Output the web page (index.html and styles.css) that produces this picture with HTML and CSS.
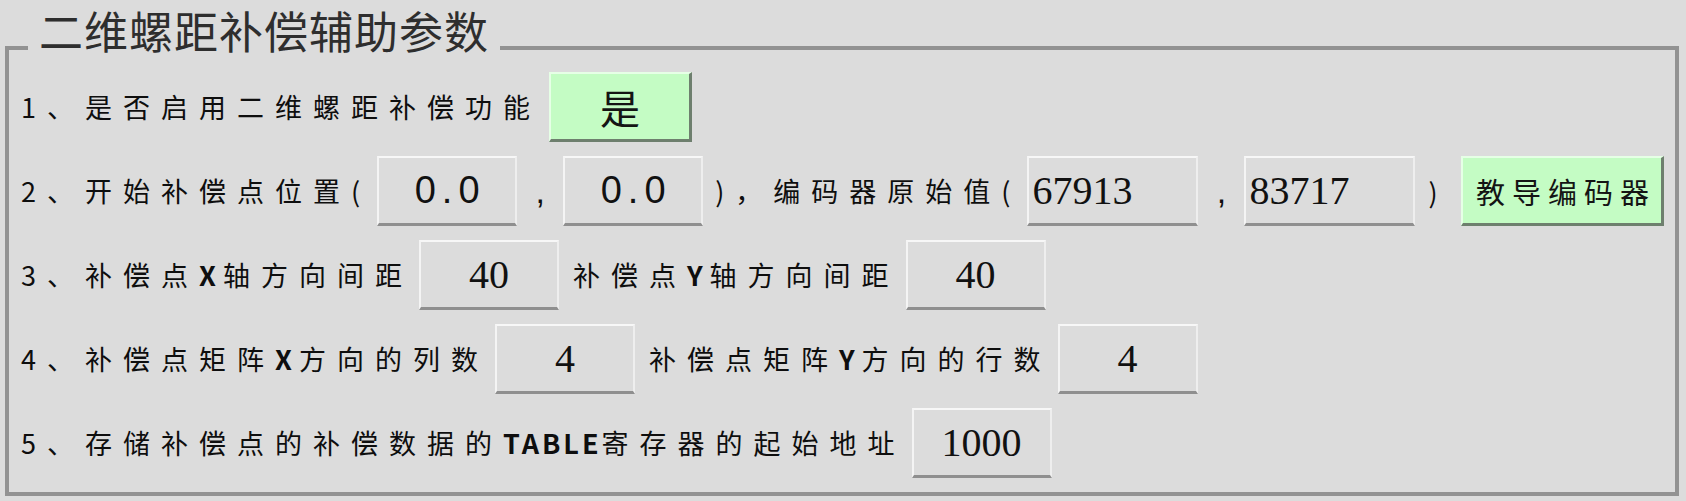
FILE: index.html
```html
<!DOCTYPE html>
<html lang="zh-CN">
<head>
<meta charset="utf-8">
<title>二维螺距补偿辅助参数</title>
<link rel="stylesheet" href="styles.css">
</head>
<body>
<div class="panel">
  <div class="title">二维螺距补偿辅助参数</div>

  <div class="row">
    <span class="lbl">1、是否启用二维螺距补偿功能</span>
    <div class="btn btn-yes">是</div>
  </div>

  <div class="row">
    <span class="lbl">2、开始补偿点位置(</span>
    <div class="box box-pos sans">0.0</div>
    <span class="sep">,</span>
    <div class="box box-pos sans">0.0</div>
    <span class="lbl lbl-enc">)，编码器原始值(</span>
    <div class="box box-enc serif left">67913</div>
    <span class="sep sep-enc">,</span>
    <div class="box box-enc serif left">83717</div>
    <span class="close">)</span>
    <div class="btn btn-teach">教导编码器</div>
  </div>

  <div class="row">
    <span class="lbl">3、补偿点<span class="lat">X</span>轴方向间距</span>
    <div class="box box-num serif gap-a">40</div>
    <span class="lbl lbl-second">补偿点<span class="lat">Y</span>轴方向间距</span>
    <div class="box box-num serif gap-a">40</div>
  </div>

  <div class="row">
    <span class="lbl">4、补偿点矩阵<span class="lat">X</span>方向的列数</span>
    <div class="box box-num serif gap-a">4</div>
    <span class="lbl lbl-second">补偿点矩阵<span class="lat">Y</span>方向的行数</span>
    <div class="box box-num serif gap-a">4</div>
  </div>

  <div class="row">
    <span class="lbl">5、存储补偿点的补偿数据的<span class="lat lat-word">TABLE</span>寄存器的起始地址</span>
    <div class="box box-num serif gap-a">1000</div>
  </div>
</div>
</body>
</html>
```

FILE: styles.css
```css
html, body {
  margin: 0;
  padding: 0;
  background: #dcdcdc;
}

body {
  width: 1686px;
  height: 501px;
  overflow: hidden;
  font-family: "Noto Sans CJK SC", "Noto Sans", sans-serif;
  color: #0e0e0e;
}

.panel {
  position: relative;
  box-sizing: border-box;
  margin: 46px 0 0 5px;
  width: 1674px;
  height: 450px;
  border: 4px solid #929292;
  padding: 22px 0 0 12px;
  display: flex;
  flex-direction: column;
  gap: 14px;
}

.title {
  position: absolute;
  left: 19px;
  top: -45px;
  padding: 0 11px;
  background: #dcdcdc;
  font-size: 44px;
  line-height: 50px;
  color: #2e2e2e;
  letter-spacing: 1px;
  white-space: nowrap;
}

.row {
  height: 70px;
  display: flex;
  align-items: center;
}

.lbl {
  font-size: 27px;
  letter-spacing: 11px;
  white-space: nowrap;
  line-height: 1.2;
}

.lat {
  letter-spacing: 7px;
  font-weight: 700;
}

.lat-word {
  letter-spacing: 3px;
}

.box {
  box-sizing: border-box;
  height: 70px;
  border-top: 2px solid #f7f7f7;
  border-left: 2px solid #f4f4f4;
  border-right: 2px solid #eeeeee;
  border-bottom: 3px solid #8f8f8f;
  background: #dcdcdc;
  display: flex;
  align-items: center;
  justify-content: center;
  color: #111;
  flex-shrink: 0;
}

.box.left {
  justify-content: flex-start;
  padding-left: 3px;
}

.sans {
  font-family: "Liberation Sans", Arial, sans-serif;
  font-size: 38px;
  letter-spacing: 6px;
  padding-left: 6px;
}

.serif {
  font-family: "Liberation Serif", "Times New Roman", serif;
  font-size: 40px;
}

.box-pos {
  width: 140px;
  margin-left: 6px;
}

.sep {
  width: 46px;
  text-align: center;
  font-size: 34px;
  font-family: "Liberation Sans", Arial, sans-serif;
}

.sep + .box-pos {
  margin-left: 0;
}

.lbl-enc {
  margin-left: 12px;
}

.box-enc {
  width: 171px;
  margin-left: 6px;
}

.sep-enc + .box-enc {
  margin-left: 0;
}

.close {
  width: 46px;
  box-sizing: border-box;
  padding-left: 13px;
  font-size: 27px;
}

.box-num {
  width: 140px;
}

.gap-a {
  margin-left: 6px;
}

.lbl-second {
  margin-left: 14px;
}

.btn {
  box-sizing: border-box;
  height: 70px;
  background: #c4fcc4;
  border-top: 2px solid #e6ffe6;
  border-left: 2px solid #e6ffe6;
  border-right: 3px solid #6e7f6e;
  border-bottom: 3px solid #6e7f6e;
  display: flex;
  align-items: center;
  justify-content: center;
  color: #141414;
  flex-shrink: 0;
}

.btn-yes {
  width: 143px;
  margin-left: 8px;
  font-size: 40px;
}

.btn-teach {
  width: 203px;
  font-size: 29px;
  letter-spacing: 7px;
  padding-left: 7px;
}
```
